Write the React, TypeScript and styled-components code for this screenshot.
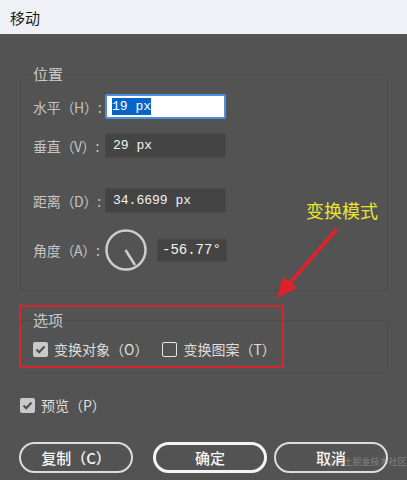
import React from 'react';
import styled, { createGlobalStyle } from 'styled-components';

const GlobalStyle = createGlobalStyle`
  html, body {
    margin: 0;
    padding: 0;
    background: #535353;
  }
  * {
    box-sizing: border-box;
  }
`;

const cjk = `"Noto Sans CJK SC", "Noto Sans", sans-serif`;
const mono = `"Liberation Mono", "DejaVu Sans Mono", monospace`;

const Window = styled.div`
  position: relative;
  width: 407px;
  height: 480px;
  overflow: hidden;
  background: #535353;
  font-family: ${cjk};
`;

const TitleBar = styled.div`
  height: 34px;
  display: flex;
  align-items: center;
  padding-left: 10px;
  background: #eff1f6;
  color: #1b1b1b;
  font-size: 15px;
  line-height: 1;
`;

const Body = styled.div`
  padding: 0 19px 0 20px;
  display: flex;
  flex-direction: column;
`;

const Group = styled.fieldset<{ $top: number; $bottom: number }>`
  margin: ${(p) => p.$top}px 0 0;
  padding: 0 12px ${(p) => p.$bottom}px;
  min-width: 0;
  border: 1px solid #4b4b4b;
  border-radius: 3px;
`;

const Legend = styled.legend`
  padding: 0;
  font-size: 15px;
  line-height: 16px;
  color: #c9c9c9;
`;

const Row = styled.div<{ $gap: number; $h?: number }>`
  display: flex;
  align-items: center;
  margin-top: ${(p) => p.$gap}px;
  height: ${(p) => p.$h ?? 25}px;
`;

const Label = styled.span`
  width: 72px;
  flex: none;
  font-size: 14px;
  color: #c4c4c4;
  white-space: nowrap;
  letter-spacing: -0.3px;
`;

const Field = styled.div<{ $w: number; $h?: number; $focus?: boolean; $big?: boolean }>`
  width: ${(p) => p.$w}px;
  height: ${(p) => p.$h ?? 25}px;
  display: flex;
  align-items: center;
  padding-left: ${(p) => (p.$focus ? 5 : p.$big ? 4 : 7)}px;
  font-family: ${mono};
  font-size: ${(p) => (p.$big ? 14 : 13)}px;
  color: #f2f2f2;
  background: ${(p) => (p.$focus ? '#ffffff' : '#444444')};
  border: ${(p) => (p.$focus ? '2px solid #4a8fe0' : '1px solid #4a4a4a')};
  border-radius: 2px;
  white-space: pre;
`;

const Selected = styled.span`
  background: #0a63c9;
  color: #ffffff;
  line-height: 17px;
`;

const Dial = styled.svg`
  flex: none;
  width: 44px;
  height: 44px;
  margin-left: -1px;
  margin-right: 9px;
`;

const CheckRow = styled.div<{ $gap: number }>`
  display: flex;
  align-items: center;
  height: 16px;
  margin-top: ${(p) => p.$gap}px;
`;

const Check = styled.label<{ $after?: number }>`
  display: flex;
  align-items: center;
  gap: 6px;
  margin-right: ${(p) => p.$after ?? 0}px;
  font-size: 14px;
  line-height: 16px;
  color: #dedede;
  white-space: nowrap;
`;

const Box = styled.span<{ $on?: boolean }>`
  width: 15px;
  height: 15px;
  flex: none;
  display: flex;
  align-items: center;
  justify-content: center;
  border-radius: 2px;
  background: ${(p) => (p.$on ? '#c9c9c9' : 'transparent')};
  border: ${(p) => (p.$on ? 'none' : '1.5px solid #e4e4e4')};
`;

const ButtonRow = styled.div`
  display: flex;
  margin-top: 29px;
  margin-left: -1px;
  & > :nth-child(2) {
    margin-left: 20px;
  }
  & > :nth-child(3) {
    margin-left: 7px;
  }
`;

const Button = styled.button<{ $primary?: boolean }>`
  width: 114px;
  height: 31px;
  border-radius: 16px;
  border: ${(p) => (p.$primary ? '3px solid #f4f4f4' : '2px solid #dddddd')};
  background: transparent;
  color: #f6f6f6;
  font-family: ${cjk};
  font-size: 15px;
  line-height: 20px;
  font-weight: 500;
  padding: 0;
`;

const Annotation = styled.div`
  position: absolute;
  left: 306px;
  top: 199px;
  font-size: 18px;
  line-height: 22px;
  color: #e8e62c;
  font-family: ${cjk};
`;

const Highlight = styled.div`
  position: absolute;
  left: 19px;
  top: 305px;
  width: 265px;
  height: 63px;
  border: 2px solid #d3262e;
`;

const Arrow = styled.svg`
  position: absolute;
  left: 270px;
  top: 225px;
  width: 75px;
  height: 80px;
`;

const Watermark = styled.div`
  position: absolute;
  left: 326px;
  top: 456px;
  font-size: 9px;
  line-height: 12px;
  color: rgba(255, 255, 255, 0.28);
  white-space: nowrap;
`;

const Tick = () => (
  <svg width="11" height="9" viewBox="0 0 11 9">
    <path d="M1.5 4.5 L4.2 7.2 L9.5 1.5" fill="none" stroke="#4e4e4e" strokeWidth="2" />
  </svg>
);

function App() {
  return (
    <Window>
      <GlobalStyle />
      <TitleBar>移动</TitleBar>
      <Body>
        <Group $top={32} $bottom={18}>
          <Legend>位置</Legend>
          <Row $gap={12}>
            <Label>水平（H）:</Label>
            <Field $w={121} $focus>
              <Selected>19 px</Selected>
            </Field>
          </Row>
          <Row $gap={14}>
            <Label>垂直（V）:</Label>
            <Field $w={121}>29 px</Field>
          </Row>
          <Row $gap={30}>
            <Label>距离（D）:</Label>
            <Field $w={121}>34.6699 px</Field>
          </Row>
          <Row $gap={15} $h={44}>
            <Label>角度（A）:</Label>
            <Dial viewBox="0 0 44 44">
              <circle cx="22" cy="22" r="19.5" fill="none" stroke="#cdcdcd" strokeWidth="2.5" />
              <line x1="21.5" y1="22" x2="31" y2="37" stroke="#cdcdcd" strokeWidth="2.5" />
            </Dial>
            <Field $w={70} $h={23} $big>-56.77°</Field>
          </Row>
        </Group>

        <Group $top={21} $bottom={15}>
          <Legend>选项</Legend>
          <CheckRow $gap={13}>
            <Check $after={14}>
              <Box $on>
                <Tick />
              </Box>
              变换对象（O）
            </Check>
            <Check>
              <Box />
              变换图案（T）
            </Check>
          </CheckRow>
        </Group>

        <CheckRow $gap={24}>
          <Check>
            <Box $on>
              <Tick />
            </Box>
            预览（P）
          </Check>
        </CheckRow>

        <ButtonRow>
          <Button>复制（C）</Button>
          <Button $primary>确定</Button>
          <Button>取消</Button>
        </ButtonRow>
      </Body>

      <Annotation>变换模式</Annotation>
      <Arrow viewBox="0 0 75 80">
        <line x1="66" y1="5" x2="18" y2="60" stroke="#e3202a" strokeWidth="3.5" strokeLinecap="round" />
        <polygon points="7,73 13,52 27,63" fill="#e3202a" />
      </Arrow>
      <Highlight />
      <Watermark>@稀土掘金技术社区</Watermark>
    </Window>
  );
}

export default App;
